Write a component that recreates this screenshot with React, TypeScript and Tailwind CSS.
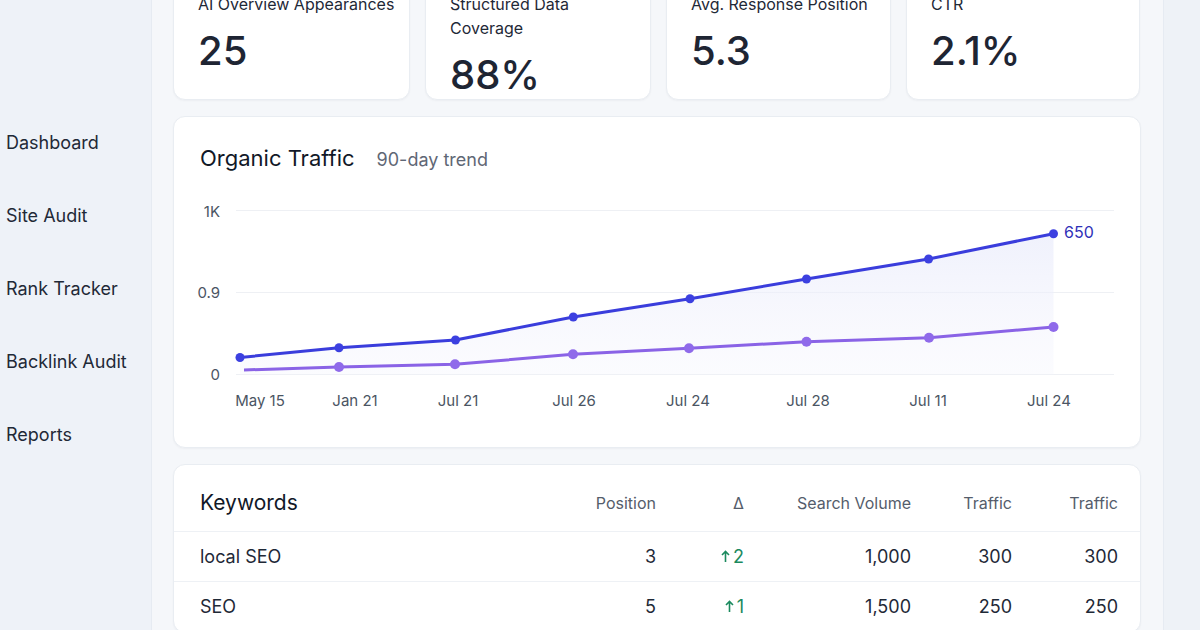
import React from "react";

const navItems = ["Dashboard", "Site Audit", "Rank Tracker", "Backlink Audit", "Reports"];

const stats = [
  { label: "AI Overview Appearances", value: "25" },
  { label: "Structured Data\nCoverage", value: "88%" },
  { label: "Avg. Response Position", value: "5.3" },
  { label: "CTR", value: "2.1%" },
];

const xLabels = [
  { x: 86, t: "May 15" },
  { x: 181, t: "Jan 21" },
  { x: 284, t: "Jul 21" },
  { x: 400, t: "Jul 26" },
  { x: 514, t: "Jul 24" },
  { x: 634, t: "Jul 28" },
  { x: 754, t: "Jul 11" },
  { x: 875, t: "Jul 24" },
];

const organic: [number, number][] = [
  [66, 166.5],
  [165, 156.7],
  [281.5, 149],
  [399.3, 126],
  [516, 107.7],
  [632.5, 88],
  [754.6, 68],
  [879.5, 42.7],
];

const referral: [number, number][] = [
  [70, 179],
  [165, 176],
  [281, 173.3],
  [399, 163.3],
  [515, 157.3],
  [632.5, 150.7],
  [755, 146.7],
  [879.5, 136],
];

const keywords = [
  { kw: "local SEO", pos: 3, delta: 2, volume: "1,000", traffic: 300, traffic2: 300 },
  { kw: "SEO", pos: 5, delta: 1, volume: "1,500", traffic: 250, traffic2: 250 },
];

const toPath = (pts: [number, number][]) => pts.map(([x, y], i) => `${i ? "L" : "M"}${x} ${y}`).join(" ");

function TrafficChart() {
  const baseline = 183.5;
  const area = `${toPath(organic)} L879.5 ${baseline} L66 ${baseline} Z`;

  return (
    <svg width="966" height="230" viewBox="0 0 966 230" className="block">
      <defs>
        <linearGradient id="areaFill" x1="0" y1="0" x2="0" y2="1">
          <stop offset="0%" stopColor="#e9ebfb" stopOpacity="0.7" />
          <stop offset="100%" stopColor="#f4f5fd" stopOpacity="0.35" />
        </linearGradient>
      </defs>

      {[19.5, 101.5, 183.5].map((y) => (
        <line key={y} x1="62" x2="940" y1={y} y2={y} stroke="#eef0f4" strokeWidth="1.2" />
      ))}

      <g fill="#4b5563" fontSize="15" textAnchor="end">
        <text x="46" y="26">1K</text>
        <text x="46" y="107">0.9</text>
        <text x="46" y="189">0</text>
      </g>

      <path d={area} fill="url(#areaFill)" />

      <path d={toPath(referral)} fill="none" stroke="#8a63e6" strokeWidth="3" strokeLinejoin="round" />
      {referral.slice(1).map(([x, y]) => (
        <circle key={x} cx={x} cy={y} r="5" fill="#8f6aea" />
      ))}

      <path d={toPath(organic)} fill="none" stroke="#3a3ddc" strokeWidth="3" strokeLinejoin="round" />
      {organic.map(([x, y]) => (
        <circle key={x} cx={x} cy={y} r="4.5" fill="#3c40e0" />
      ))}

      <text x="890" y="47" fill="#2f30b8" fontSize="16">
        650
      </text>

      <g fill="#4b5563" fontSize="15" textAnchor="middle">
        {xLabels.map((l) => (
          <text key={l.x} x={l.x} y="215">
            {l.t}
          </text>
        ))}
      </g>
    </svg>
  );
}

export default function App() {
  return (
    <div className="flex h-[630px] w-[1200px] overflow-hidden font-['Inter','Liberation_Sans',sans-serif] text-[#1f2937]">
      <aside className="w-[152px] shrink-0 bg-[#eef2f8] border-r border-[#e6ebf2]">
        <nav className="flex flex-col gap-[45px] pt-[129px] pl-[6px]">
          {navItems.map((item) => (
            <a key={item} className="text-[18px] leading-7 text-[#1f2937]">
              {item}
            </a>
          ))}
        </nav>
      </aside>

      <main className="w-[1011px] shrink-0 bg-[#f5f7fa] pl-[21px]">
        <div className="flex w-[968px] flex-col gap-[16px] -mt-[29px]">
          <div className="grid grid-cols-[237px_226px_225px_234px] gap-[15px]">
            {stats.map((s) => (
              <div
                key={s.value}
                className="rounded-xl border border-[#e9edf2] bg-white pl-6 pt-5 pb-[4px] shadow-[0_1px_2px_rgba(15,23,42,0.04)]"
              >
                <div className="whitespace-pre text-base leading-6 text-[#1f2937]">{s.label}</div>
                <div className="mt-[15px] text-[40px] font-medium leading-none text-[#1e2533]">{s.value}</div>
              </div>
            ))}
          </div>

          <section className="rounded-xl border border-[#e9edf2] bg-white pt-[27px] pb-[26px] shadow-[0_1px_2px_rgba(15,23,42,0.04)]">
            <div className="flex items-baseline gap-[22px] px-[26px]">
              <h2 className="text-[22px] leading-7 text-[#111827]">Organic Traffic</h2>
              <span className="text-lg text-[#5f6775]">90-day trend</span>
            </div>
            <div className="mt-[17px]">
              <TrafficChart />
            </div>
          </section>

          <section className="rounded-xl border border-[#e9edf2] bg-white shadow-[0_1px_2px_rgba(15,23,42,0.04)]">
            <div className="grid grid-cols-[336px_120px_88px_167px_101px_106px] items-center border-b border-[#eef1f5] pl-[26px] pr-[22px] pt-[24px] pb-[14px]">
              <h2 className="text-[21px] leading-7 text-[#111827]">Keywords</h2>
              <span className="text-right text-base text-[#555d6b]">Position</span>
              <span className="text-right text-base text-[#555d6b]">Δ</span>
              <span className="text-right text-base text-[#555d6b]">Search Volume</span>
              <span className="text-right text-base text-[#555d6b]">Traffic</span>
              <span className="text-right text-base text-[#555d6b]">Traffic</span>
            </div>
            {keywords.map((k) => (
              <div
                key={k.kw}
                className="grid h-[50px] grid-cols-[336px_120px_88px_167px_101px_106px] items-center border-b border-[#eef1f5] pl-[26px] pr-[22px] text-lg text-[#1f2937]"
              >
                <span>{k.kw}</span>
                <span className="text-right">{k.pos}</span>
                <span className="flex items-center justify-end gap-[3px] text-[#1b8a5e]">
                  <svg width="9" height="13" viewBox="0 0 9 13" fill="none" stroke="currentColor" strokeWidth="1.6">
                    <path d="M4.5 12V1.5M1 5l3.5-3.5L8 5" />
                  </svg>
                  {k.delta}
                </span>
                <span className="text-right">{k.volume}</span>
                <span className="text-right">{k.traffic}</span>
                <span className="text-right">{k.traffic2}</span>
              </div>
            ))}
          </section>
        </div>
      </main>

      <div className="flex-1 border-l border-[#e6ebf2] bg-[#eef2f7]" />
    </div>
  );
}
